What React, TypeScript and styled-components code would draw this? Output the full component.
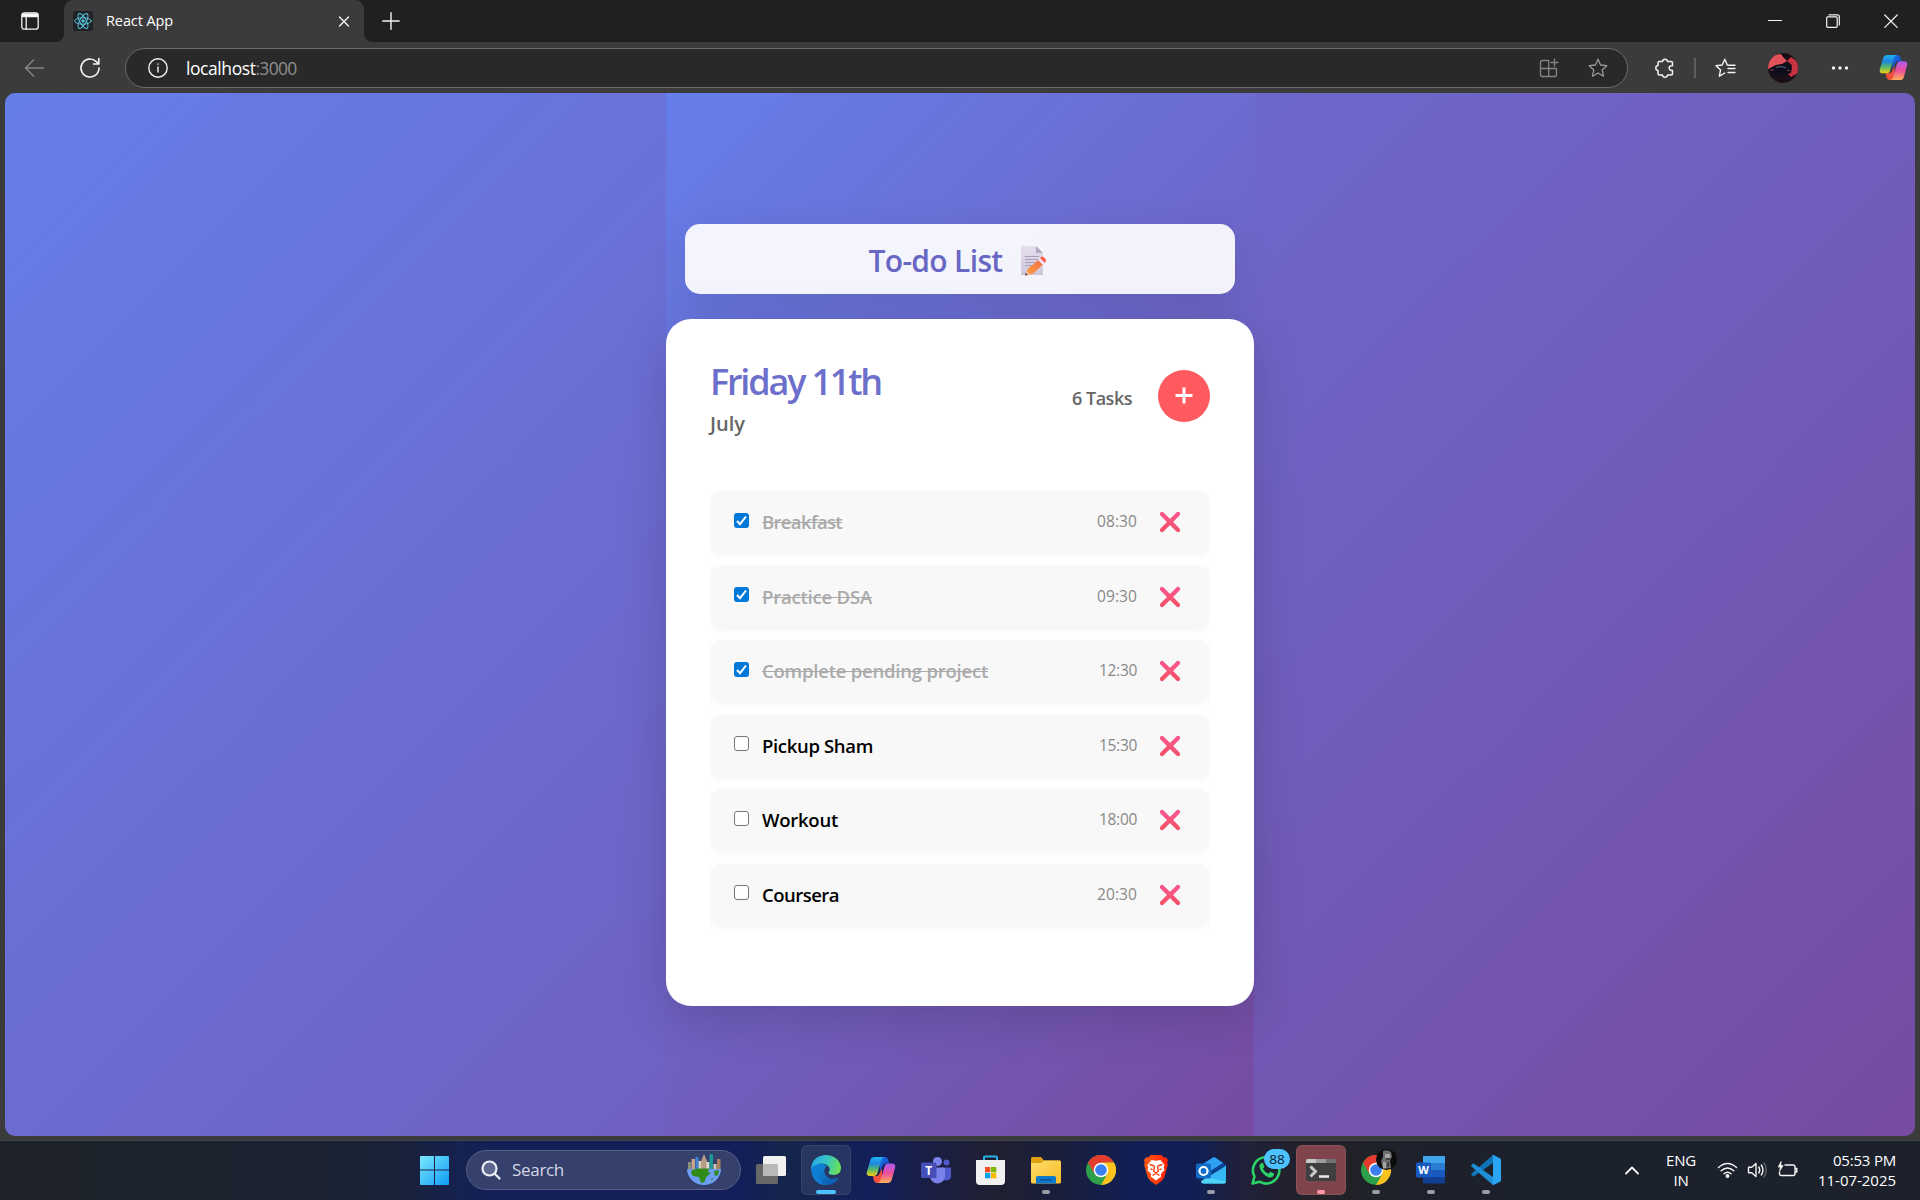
import React from "react";
import styled, { createGlobalStyle } from "styled-components";

const Global = createGlobalStyle`
  * { box-sizing: border-box; }
  html, body { margin: 0; padding: 0; }
  body { font-family: "Open Sans", "Noto Sans", sans-serif; overflow: hidden; }
  svg { display: block; flex: none; }
`;

const Screen = styled.div`
  width: 1920px;
  height: 1200px;
  display: flex;
  flex-direction: column;
  background: #3b3b3b;
  overflow: hidden;
`;

/* ---------- text fitted to a fixed advance width ---------- */
const FitSpan = styled.span<{ $w: number }>`
  display: inline-block;
  width: ${(p) => p.$w}px;
  white-space: nowrap;
  text-decoration: inherit;
`;

function Fit({ w, children }: { w: number; children: string }) {
  const ref = React.useRef<HTMLSpanElement>(null);
  const [spacing, setSpacing] = React.useState(0);
  React.useLayoutEffect(() => {
    const el = ref.current;
    if (!el) return;
    const range = document.createRange();
    range.selectNodeContents(el);
    const natural = range.getBoundingClientRect().width;
    setSpacing((w - natural) / children.length);
  }, [w, children]);
  return (
    <FitSpan ref={ref} $w={w} style={{ letterSpacing: spacing }}>
      {children}
    </FitSpan>
  );
}

/* ---------- browser chrome ---------- */
const TabStrip = styled.div`
  height: 42px;
  flex: none;
  display: flex;
  background: #202020;
`;
const TabActions = styled.div`
  width: 64px;
  display: flex;
  align-items: center;
  padding-left: 21px;
  background: #202020;
  border-bottom-right-radius: 8px;
`;
const TabWell = styled.div`
  display: flex;
  background: linear-gradient(#202020 20px, #3b3b3b 20px);
`;
const Tab = styled.div`
  width: 300px;
  display: flex;
  align-items: center;
  background: #3b3b3b;
  border-radius: 9px 9px 0 0;
  padding: 0 14px 0 9px;
  color: #fff;
  font-size: 14.5px;
`;
const TabIcon = styled.div`
  width: 20px;
  height: 20px;
  border-radius: 2px;
  background: #202225;
  margin-right: 13px;
`;
const TabTitle = styled.div`
  flex: 1;
  line-height: 20px;
  margin-top: -1px;
`;
const StripBack = styled.div`
  flex: 1;
  display: flex;
  background: #3b3b3b;
`;
const StripRest = styled.div`
  flex: 1;
  display: flex;
  align-items: center;
  justify-content: space-between;
  background: #202020;
  border-bottom-left-radius: 8px;
  padding: 0 22px 0 18px;
`;
const WindowButtons = styled.div`
  display: flex;
  gap: 44px;
  align-items: center;
`;
const Toolbar = styled.div`
  height: 51px;
  flex: none;
  display: flex;
  align-items: center;
  background: #3b3b3b;
  padding-left: 24px;
`;
const NavButtons = styled.div`
  display: flex;
  gap: 35px;
  width: 101px;
  align-items: center;
`;
const AddressBar = styled.div`
  width: 1503px;
  height: 40px;
  display: flex;
  align-items: center;
  border: 1px solid #6a6a6a;
  border-radius: 20px;
  background: #292929;
  padding: 0 19px 0 22px;
`;
const Url = styled.div`
  flex: 1;
  display: flex;
  margin-left: 18px;
  font-size: 17.5px;
  line-height: 24px;
  color: #fff;
`;
const Port = styled.span`
  color: #8f8f8f;
`;
const AddressIcons = styled.div`
  display: flex;
  gap: 29px;
`;
const ToolIcons = styled.div`
  display: flex;
  align-items: center;
  padding-left: 27px;
`;
const ToolDivider = styled.div`
  width: 2px;
  height: 20px;
  margin: 0 19px;
  background: #5c5c5c;
`;
const ProfileButton = styled.div`
  margin: 0 33px 0 32px;
`;
const CopilotButton = styled.div`
  margin-left: 30px;
`;

/* ---------- page ---------- */
const Page = styled.div`
  flex: none;
  height: 1043px;
  margin: 0 5px 4px;
  border-radius: 10px;
  overflow: hidden;
  display: flex;
  justify-content: center;
  background: linear-gradient(135deg, #667eea 0%, #764ba2 100%);
`;
const Column = styled.main`
  width: 588px;
  display: flex;
  flex-direction: column;
  align-items: center;
  padding-top: 131px;
  background: linear-gradient(135deg, #667eea 0%, #764ba2 100%);
`;
const Banner = styled.h1`
  width: 550px;
  height: 70px;
  flex: none;
  margin: 0 0 25px;
  padding: 3px 4px 0 0;
  display: flex;
  align-items: center;
  justify-content: center;
  gap: 17px;
  border-radius: 15px;
  background: rgba(255, 255, 255, 0.92);
  box-shadow: 0 10px 40px rgba(0, 0, 0, 0.1);
  color: #6867c4;
  font-size: 30px;
  line-height: 40px;
  font-weight: 600;
`;
const Card = styled.section`
  width: 588px;
  height: 687px;
  flex: none;
  padding: 44px 44px 0;
  border-radius: 25px;
  background: #fff;
  box-shadow: 0 12px 50px rgba(0, 0, 0, 0.16);
`;
const CardHeader = styled.header`
  height: 128px;
  display: flex;
  justify-content: space-between;
`;
const DateTitle = styled.h2`
  margin: 0;
  color: #6c6fcb;
  font-size: 36px;
  line-height: 38px;
  font-weight: 600;
`;
const Month = styled.div`
  margin-top: 10px;
  color: #666;
  font-size: 20px;
  line-height: 26px;
  font-weight: 600;
`;
const Summary = styled.div`
  display: flex;
  align-items: center;
  height: 52px;
  margin-top: 7px;
  gap: 26px;
`;
const TaskCount = styled.div`
  margin-top: 3px;
  color: #666;
  font-size: 18px;
  line-height: 24px;
  font-weight: 600;
`;
const AddButton = styled.button`
  width: 52px;
  height: 52px;
  border: 0;
  padding: 0;
  border-radius: 50%;
  background: #ff5a5f;
  display: flex;
  align-items: center;
  justify-content: center;
`;
const TaskList = styled.div`
  display: flex;
  flex-direction: column;
  gap: 14.5px;
  padding-bottom: 14px;
  overflow: hidden;
`;
const Task = styled.div`
  height: 60px;
  flex: none;
  display: flex;
  align-items: center;
  padding: 0 29px 0 24px;
  border-radius: 12px;
  background: #f8f8f8;
  box-shadow: 0 3px 8px rgba(0, 0, 0, 0.05);
`;
const Box = styled.div<{ $on: boolean }>`
  width: 15px;
  height: 15px;
  flex: none;
  margin: 0 13px 2px 0;
  border-radius: 3px;
  border: ${(p) => (p.$on ? "0" : "1px solid #767676")};
  background: ${(p) => (p.$on ? "#0078d7" : "#fff")};
`;
const TaskName = styled.div<{ $on: boolean }>`
  flex: 1;
  margin-top: 2px;
  font-size: 18.5px;
  line-height: 26px;
  font-weight: 600;
  color: ${(p) => (p.$on ? "#aaa" : "#000")};
  text-decoration: ${(p) => (p.$on ? "line-through 1px" : "none")};
`;
const TaskTime = styled.div`
  margin-right: 22px;
  font-size: 15.5px;
  line-height: 20px;
  font-weight: 500;
  color: #888;
`;
const RemoveButton = styled.div`
  margin-top: 2px;
`;

/* ---------- taskbar ---------- */
const Taskbar = styled.footer`
  height: 60px;
  flex: none;
  display: flex;
  align-items: center;
  justify-content: space-between;
  border-top: 1px solid #3d4450;
  background: linear-gradient(90deg, #1e2228 0, #1c222c 130px, #1b2331 300px, #182138 400px, #17224a 440px, #122057 500px, #131f59 740px, #15244b 785px,
    #121f5a 870px, #1b1e40 940px, #201f31 1000px, #191f3f 1070px, #111f57 1140px, #121f53 1200px, #20203c 1235px,
    #222226 1320px, #1e212c 1420px, #1b212d 1540px, #1c212c 1920px);
  color: #fff;
`;
const Apps = styled.div`
  display: flex;
  align-items: center;
  padding: 0 0 1px 410px;
`;
const AppSlot = styled.div<{ $tone?: string; $gap?: number }>`
  width: 50px;
  height: 50px;
  margin-right: ${(p) => p.$gap ?? 5}px;
  border-radius: 6px;
  display: flex;
  flex-direction: column;
  align-items: center;
  justify-content: flex-end;
  background: ${(p) => p.$tone ?? "transparent"};
  box-shadow: ${(p) => (p.$tone ? "inset 0 0 0 1px rgba(255,255,255,.07)" : "none")};
`;
const IconWrap = styled.div`
  position: relative;
  width: 30px;
  height: 30px;
  margin-bottom: 5px;
`;
const Running = styled.div<{ $color?: string; $w: number }>`
  width: ${(p) => p.$w}px;
  height: 4px;
  margin-bottom: 1px;
  border-radius: 2px;
  background: ${(p) => p.$color ?? "transparent"};
`;
const Search = styled.div`
  width: 275px;
  height: 40px;
  margin-right: 5px;
  display: flex;
  align-items: center;
  border-radius: 20px;
  border: 1px solid #555f87;
  background: #35406d;
  padding: 0 18px 0 14px;
`;
const SearchText = styled.div`
  flex: 1;
  margin-left: 11px;
  font-size: 17px;
  line-height: 24px;
  color: #d3d6e2;
`;
const Badge = styled.div`
  position: absolute;
  top: -6px;
  left: 13px;
  width: 26px;
  height: 20px;
  border-radius: 10px;
  background: #4cc2ff;
  color: #0c1a2b;
  font-size: 13.5px;
  line-height: 20px;
  text-align: center;
`;
const Avatar = styled.div`
  position: absolute;
  top: -6px;
  left: 15px;
`;
const Tray = styled.div`
  display: flex;
  align-items: center;
  padding: 0 24px 2px 0;
  font-size: 15px;
  line-height: 20px;
`;
const Lang = styled.div`
  width: 32px;
  margin: 0 20px 0 25px;
  display: flex;
  flex-direction: column;
  align-items: center;
`;
const Status = styled.div`
  display: flex;
  gap: 9px;
  margin-right: 20px;
`;
const Clock = styled.div`
  display: flex;
  flex-direction: column;
  align-items: flex-end;
`;

/* ---------- drawings ---------- */
const Line = (p: { w?: number; h?: number; c?: string; sw?: number; children: React.ReactNode }) => (
  <svg
    width={p.w ?? 20}
    height={p.h ?? 20}
    viewBox={`0 0 ${p.w ?? 20} ${p.h ?? 20}`}
    fill="none"
    stroke={p.c ?? "#f4f4f4"}
    strokeWidth={p.sw ?? 1.4}
    strokeLinecap="round"
    strokeLinejoin="round"
  >
    {p.children}
  </svg>
);
const STAR = "M10 1.3 L12.6 7 L18.8 7.7 L14.2 11.9 L15.5 18.2 L10 15 L4.5 18.2 L5.8 11.9 L1.2 7.7 L7.4 7 Z";

const ReactLogo = () => (
  <Line c="#58c4dc" sw={1}>
    <ellipse cx="10" cy="10" rx="8.4" ry="3.2" />
    <ellipse cx="10" cy="10" rx="8.4" ry="3.2" transform="rotate(60 10 10)" />
    <ellipse cx="10" cy="10" rx="8.4" ry="3.2" transform="rotate(120 10 10)" />
    <circle cx="10" cy="10" r="1.2" fill="#58c4dc" />
  </Line>
);

const Memo = () => (
  <svg width="28" height="32" viewBox="0 0 28 32">
    <defs>
      <linearGradient id="paper" x1="0" y1="0" x2="0" y2="1">
        <stop offset="0" stopColor="#e4dfee" />
        <stop offset="1" stopColor="#cfc6da" />
      </linearGradient>
      <linearGradient id="pencil" x1="0" y1="1" x2="1" y2="0">
        <stop offset="0" stopColor="#ff9a3c" />
        <stop offset="1" stopColor="#f2704a" />
      </linearGradient>
    </defs>
    <path d="M1 1h15l7 7v22H1z" fill="url(#paper)" />
    <path d="M16 1l7 7h-7z" fill="#b3abc0" />
    <path d="M5 11.500h14M5 14.500h14M5 17.500h12M5 20.500h7" stroke="#a79fb6" strokeWidth="1.200" />
    <path d="M6.500 29.500l1.200-5.500L19 14.500l4.500 4.500L12.500 29z" fill="url(#pencil)" />
    <path d="M5.500 30.500l1-4.500 3.800 3.700z" fill="#f3c3a8" />
    <path d="M5 30.500l.6-2.800 2.400 2.300z" fill="#5b3a4d" />
    <path d="M18 15l2-2 4.800 4.800-2 2z" fill="#ece6f2" />
    <path d="M20 13l1.500-1.200q1.200-.6 2 .2l2.300 2.500q.8 1 0 1.900l-1.200 1.300z" fill="#ff5c50" />
  </svg>
);

const Cross = () => (
  <svg width="22" height="22" viewBox="0 0 22 22">
    <defs>
      <linearGradient id="cross" x1="0" y1="0" x2="0" y2="1">
        <stop offset="0" stopColor="#fc5690" />
        <stop offset="1" stopColor="#f45263" />
      </linearGradient>
    </defs>
    <path d="M3 3L19 19M19 3L3 19" stroke="#ea4a7c" strokeWidth="4.200" strokeLinecap="round" />
    <path d="M3 3L19 19M19 3L3 19" stroke="url(#cross)" strokeWidth="3.200" strokeLinecap="round" />
  </svg>
);

const Copilot = ({ size, id }: { size: number; id: string }) => (
  <svg width={size} height={size} viewBox="0 0 30 30">
    <defs>
      <linearGradient id={id + "a"} x1="0" y1="0" x2="0" y2="1">
        <stop offset="0" stopColor="#1fb3f5" />
        <stop offset=".35" stopColor="#1f86e0" />
        <stop offset=".65" stopColor="#53b86a" />
        <stop offset="1" stopColor="#f5cf13" />
      </linearGradient>
      <linearGradient id={id + "b"} x1="0" y1="0" x2="0" y2="1">
        <stop offset="0" stopColor="#a95cf0" />
        <stop offset=".5" stopColor="#ee4e9b" />
        <stop offset="1" stopColor="#ffb057" />
      </linearGradient>
      <linearGradient id={id + "c"} x1="0" y1="0" x2="1" y2="1">
        <stop offset="0" stopColor="#1b74e8" />
        <stop offset="1" stopColor="#173cc0" />
      </linearGradient>
    </defs>
    <path d="M14 2h5q2.200 0 3 2.300l1.300 4.200h-3.500q-2.500 0-3.300 2.500L14 17z" fill={`url(#${id}c)`} />
    <path d="M16 28h-5q-2.200 0-3-2.300L6.700 21h3.500q2.500 0 3.300-2.500L16 13z" fill="#f0503c" />
    <path d="M8.500 2H18q-1.700.4-2.500 3l-4 13q-.9 3-3.800 3H4q-4.300 0-3-4.500L4.300 5Q5.300 2 8.500 2z" fill={`url(#${id}a)`} />
    <path d="M21.500 28H12q1.700-.4 2.500-3l4-13.500q.9-3 3.800-3H26q4.300 0 3 4.500L25.700 25q-1 3-4.200 3z" fill={`url(#${id}b)`} />
  </svg>
);

const Chrome = () => (
  <svg width="30" height="30" viewBox="0 0 30 30">
    <circle cx="15" cy="15" r="15" fill="#2da04a" />
    <path d="M2 7.500A15 15 0 0 1 28 7.500H15L8.500 18.750z" fill="#e33b2e" />
    <path d="M28 7.500A15 15 0 0 1 15 30L21.500 18.750 15 7.500z" fill="#fcc31e" />
    <circle cx="15" cy="15" r="7.300" fill="#fff" />
    <circle cx="15" cy="15" r="5.800" fill="#3a80ee" />
  </svg>
);

const Edge = () => (
  <svg width="30" height="30" viewBox="0 0 30 30">
    <defs>
      <linearGradient id="eg1" x1="0" y1="0.300" x2="1" y2="0.500">
        <stop offset="0" stopColor="#27a9e8" />
        <stop offset=".5" stopColor="#35c4c4" />
        <stop offset="1" stopColor="#6de253" />
      </linearGradient>
      <linearGradient id="eg2" x1="0" y1="0" x2="1" y2="1">
        <stop offset="0" stopColor="#1390e0" />
        <stop offset="1" stopColor="#0b55a8" />
      </linearGradient>
    </defs>
    <path d="M0 14Q1 27 14 30 23 30.500 27.500 23.500 28 22.300 26.500 22.800 19 26 14.500 20 11.500 14 16 11 8 5 0 14z" fill="url(#eg2)" />
    <path d="M8 15Q5 24 14 30 5 29.500 1.500 21-.5 15 2 11 8 7 14 11 9 12 8 15z" fill="#0f7fd6" />
    <path d="M0 14Q1 1 14.500 0 28 .5 30 12.500 30 19.500 23 20 18 20 17.500 17.800 19.500 15.500 18.500 12.800 16 8.500 10 8.500 3.500 9 0 14z" fill="url(#eg1)" />
  </svg>
);

const Icons: Record<string, React.ReactNode> = {
  start: (
    <svg width="30" height="30" viewBox="0 0 30 30">
      <defs>
        <linearGradient id="win" x1="0" y1="0" x2="1" y2="1">
          <stop offset="0" stopColor="#7be9ff" />
          <stop offset="1" stopColor="#0f9af5" />
        </linearGradient>
      </defs>
      <path d="M1 1h13v13.500H0V2q0-1 1-1zM15 1h13q1 0 1 1v12.500H15zM0 15.500h14V30H1q-1 0-1-1zM15 15.500h14V29q0 1-1 1H15z" fill="url(#win)" />
    </svg>
  ),
  taskview: (
    <svg width="30" height="30" viewBox="0 0 30 30">
      <rect x="0" y="9" width="22" height="20" rx="1.500" fill="#68686b" />
      <rect x="7" y="1" width="23" height="20" rx="1.500" fill="#f0f0f0" />
      <path d="M7 9h15v12H8.500Q7 21 7 19.500z" fill="#b9b9ba" />
    </svg>
  ),
  edge: <Edge />,
  copilot: <Copilot size={30} id="cb" />,
  teams: (
    <svg width="30" height="30" viewBox="0 0 30 30">
      <circle cx="25.500" cy="7.500" r="3" fill="#5059c9" />
      <circle cx="16.500" cy="6.500" r="4.500" fill="#7b83eb" />
      <path d="M21 12.500h8q1.500 0 1.500 1.500v6q0 5-5 5.500-3 0-4.500-2z" fill="#5059c9" />
      <path d="M9 12.500h13.500q1.500 0 1.500 1.500v7q-.5 7-7.500 7.500Q9.500 28 9 21z" fill="#7b83eb" />
      <rect x="0" y="7.500" width="15.500" height="15.500" rx="1.500" fill="#464eb8" />
      <text x="7.700" y="19.500" textAnchor="middle" fontSize="12" fontWeight="700" fill="#fff">T</text>
    </svg>
  ),
  store: (
    <svg width="30" height="30" viewBox="0 0 30 30">
      <path d="M8 6V2.500q0-1 1-1h11q1 0 1 1V6" fill="none" stroke="#25b4ea" strokeWidth="2" />
      <path d="M0 5h29v21q0 4-4 4H4q-4 0-4-4z" fill="#f1f1f1" />
      <rect x="9" y="12" width="5.300" height="5.300" fill="#f25022" />
      <rect x="15" y="12" width="5.300" height="5.300" fill="#7fba00" />
      <rect x="9" y="18" width="5.300" height="5.300" fill="#00a4ef" />
      <rect x="15" y="18" width="5.300" height="5.300" fill="#ffb900" />
    </svg>
  ),
  explorer: (
    <svg width="30" height="30" viewBox="0 0 30 30">
      <defs>
        <linearGradient id="fold" x1="0" y1="0" x2="1" y2="1">
          <stop offset="0" stopColor="#ffdc6b" />
          <stop offset="1" stopColor="#f9bd26" />
        </linearGradient>
      </defs>
      <path d="M1.500 2h8.500l3 3.500H29V12H0V3.500Q0 2 1.500 2z" fill="#dea010" />
      <path d="M0 8h10l3-2.500h15.500q1.500 0 1.500 1.500v20q0 1.500-1.500 1.500h-27Q0 28.500 0 27z" fill="url(#fold)" />
      <path d="M5 28.500V23q0-2 2-2h16q2 0 2 2v5.500z" fill="#0d78cc" />
      <path d="M9 24.700h12" stroke="#0a4f93" strokeWidth="1.300" />
    </svg>
  ),
  chrome: <Chrome />,
  brave: (
    <svg width="30" height="30" viewBox="0 0 30 30">
      <defs>
        <linearGradient id="brv" x1="0" y1="0" x2="1" y2="0">
          <stop offset="0" stopColor="#ff5a14" />
          <stop offset="1" stopColor="#ff1f05" />
        </linearGradient>
      </defs>
      <path d="M9.500 0h11l2.200 2.500 2-.3L27 5l-.8 3 .6 2-3.600 12.500-2.700 3.500L15 30l-5.500-4-2.700-3.500L3.200 10l.6-2L3 5l2.300-2.800 2 .3z" fill="url(#brv)" />
      <path d="M10.500 5l4.500.8L19.500 5l4 5-.8 2.500.8 2.500-3.700 4 .4 2.500L15 25.500 9.800 21.500l.4-2.500L6.500 15l.8-2.500L6.500 10z" fill="#fff" />
      <path d="M8.500 9.500l5 1.500M21.500 9.500l-5 1.500M13.500 11.500l-.8 5 2.300 1.300 2.300-1.300-.8-5M9.500 14l2.200.6M20.500 14l-2.200.6M11.500 20.300l3.500-1.800 3.500 1.800" stroke="#fb3d12" strokeWidth="1.400" fill="none" />
    </svg>
  ),
  outlook: (
    <svg width="30" height="30" viewBox="0 0 30 30">
      <path d="M3 11L17 2.500q1-.6 2 0L30 10v5L16 24 3 18z" fill="#0f6cc8" />
      <path d="M6 10L17 2.500q1-.6 2 0L27 8 13 17z" fill="#2f9ff0" />
      <path d="M13 17L27 8l3 2-15 12z" fill="#0d3f8f" />
      <path d="M30 11v15q0 2.500-2.500 2.500H8Q5 28.500 5 26z" fill="#35b8f3" />
      <path d="M11 22l19 5q-.5 1.500-2.500 1.500H8q-2.500 0-3-1.500z" fill="#4fd4f5" />
      <rect x="0" y="8.500" width="15" height="15" rx="2" fill="#0f6cc8" />
      <circle cx="7.500" cy="16" r="4" stroke="#fff" strokeWidth="2.200" fill="none" />
    </svg>
  ),
  whatsapp: (
    <svg width="30" height="30" viewBox="0 0 30 30">
      <path d="M1.500 28.500L3.500 21.500A13.200 13.200 0 1 1 8.500 26.700z" fill="none" stroke="#2bd366" strokeWidth="2.600" strokeLinejoin="round" />
      <path d="M10.500 8q-2.500 1.500-2 4 1.500 7 9.500 10.500 3.500.5 5-2.500v-1.500l-3.500-1.700-2 2q-4-1.500-5.500-5l1.300-1.800L12 8z" fill="#2bd366" />
    </svg>
  ),
  terminal: (
    <svg width="30" height="30" viewBox="0 0 30 30">
      <rect x="0" y="4" width="30" height="22" rx="1.500" fill="#3f3f42" />
      <path d="M1.500 4H10v4H0V5.500Q0 4 1.500 4z" fill="#c8c8c8" />
      <path d="M10 4h10v4H10z" fill="#9b9b9d" />
      <path d="M20 4h8.500Q30 4 30 5.500V8H20z" fill="#737375" />
      <path d="M4.500 11.500l5 5-5 5" stroke="#c9c9c9" strokeWidth="3" fill="none" />
      <path d="M13 21.500h10" stroke="#e6e6e6" strokeWidth="2.600" />
    </svg>
  ),
  word: (
    <svg width="30" height="30" viewBox="0 0 30 30">
      <path d="M7 1h21q1 0 1 1v6H7z" fill="#41a5ee" />
      <path d="M7 8h22v7H7z" fill="#2b7cd3" />
      <path d="M7 15h22v7H7z" fill="#185abd" />
      <path d="M7 22h22v5.500q0 1-1 1H8q-1 0-1-1z" fill="#103f91" />
      <rect x="0" y="7.500" width="15" height="15" rx="1.500" fill="#185abd" />
      <text x="7.500" y="19" textAnchor="middle" fontSize="11" fontWeight="700" fill="#fff">W</text>
    </svg>
  ),
  vscode: (
    <svg width="30" height="30" viewBox="0 0 30 30">
      <path d="M.5 18.500L22 0v8L3 21.200q-.7.400-1.200 0L.4 19.800q-.5-.7.100-1.300z" fill="#1173b8" />
      <path d="M.5 11.500L22 30v-8L3 8.800q-.7-.4-1.200 0L.4 10.200q-.5.700.1 1.300z" fill="#1c8fd8" />
      <path d="M22.500 0l6.500 3.200q1 .5 1 1.800v20q0 1.300-1 1.800L22.500 30q-1 0-1.500-.8l1-.7V1.500l-1-.7q.5-.8 1.500-.8z" fill="#2aa5f2" />
    </svg>
  ),
};

const Globe = () => (
  <svg width="36" height="34" viewBox="0 0 36 34">
    <rect x="2" y="9" width="3" height="9" fill="#8b8f7a" />
    <rect x="5.500" y="6" width="3.500" height="12" fill="#c9a58a" />
    <rect x="9.500" y="4" width="3" height="14" fill="#3e83d4" />
    <rect x="12.500" y="8" width="3" height="10" fill="#d6cfc4" />
    <path d="M15 18V8l3-7 3 7v10z" fill="#b99c88" />
    <rect x="20.500" y="9" width="3" height="9" fill="#e2d9cc" />
    <rect x="23.500" y="1" width="3.500" height="17" rx="1.500" fill="#1c9a96" />
    <rect x="27.500" y="11" width="3" height="7" fill="#d9c9b4" />
    <rect x="31" y="6" width="3.500" height="12" fill="#a9805f" />
    <path d="M1 16h34a17 16 0 0 1-34 0z" fill="#6d9df4" />
    <path d="M6 17l6-1.500h11l-1 3.500 3 1-5 4-1.500 5-3.500 1-2-6-6-1-2-3z" fill="#2f8a17" />
    <path d="M28 18l5-1-1 5-3 1zM25 26l2-1-1 3z" fill="#2f8a17" />
  </svg>
);

const Portrait = () => (
  <svg width="30" height="30" viewBox="0 0 30 30">
    <defs>
      <clipPath id="face"><circle cx="15" cy="15" r="15" /></clipPath>
      <filter id="soft"><feGaussianBlur stdDeviation=".7" /></filter>
    </defs>
    <g clipPath="url(#face)">
      <rect width="30" height="30" fill="#190f18" />
      <g filter="url(#soft)">
        <path d="M0 8l5-6 8-1 2 3 4 4-5 3-6 1-8 4z" fill="#e0525a" />
        <path d="M19 8l4-4 7 5v11l-7 4-3-3 3-4 1-5z" fill="#c9323f" />
        <path d="M13 0l2 3 5 4 3-5z" fill="#180e16" />
        <path d="M1 17q4-5 12-5.500 8 0 11 3.500l-1 5-8 2q-8 1-13-1z" fill="#0f0f1c" />
        <path d="M8 14.500q5-2 10 .5" stroke="#4f566e" strokeWidth="1.200" fill="none" />
        <path d="M2 17h4M19 17.500h3" stroke="#8b3344" strokeWidth="1.200" />
      </g>
    </g>
  </svg>
);

const MiniPortrait = () => (
  <svg width="21" height="21" viewBox="0 0 21 21">
    <circle cx="10.500" cy="10.500" r="10.500" fill="#0c0c0c" />
    <path d="M7 2q4-2 8 1l1 5-2 3 1 8-8 1-2-8 2-4z" fill="#6d6d6d" />
    <path d="M9 5h5v4H9zM7 13h3v6H7z" fill="#a5a5a5" />
    <path d="M10 10h4M12 13v5" stroke="#333" strokeWidth="1.500" />
  </svg>
);

const tasks = [
  { name: "Breakfast", w: 80, time: "08:30", tw: 40, on: true },
  { name: "Practice DSA", w: 110, time: "09:30", tw: 40, on: true },
  { name: "Complete pending project", w: 226, time: "12:30", tw: 38, on: true },
  { name: "Pickup Sham", w: 111, time: "15:30", tw: 38, on: false },
  { name: "Workout", w: 76, time: "18:00", tw: 38, on: false },
  { name: "Coursera", w: 77, time: "20:30", tw: 40, on: false },
];

const grey = "#9b9ea3";
const pinned: { id: string; run?: string; w?: number; tone?: string; badge?: string; avatar?: boolean }[] = [
  { id: "taskview" },
  { id: "edge", run: "#4cc2ff", w: 20, tone: "rgba(75,88,125,.36)" },
  { id: "copilot" },
  { id: "teams" },
  { id: "store" },
  { id: "explorer", run: grey },
  { id: "chrome" },
  { id: "brave" },
  { id: "outlook", run: grey },
  { id: "whatsapp", badge: "88" },
  { id: "terminal", run: "#ff99a4", tone: "#80454c" },
  { id: "chrome", run: grey, avatar: true },
  { id: "word", run: grey },
  { id: "vscode", run: grey },
];

export default function App() {
  return (
    <Screen>
      <Global />
      <TabStrip>
        <TabWell>
          <TabActions>
            <Line w={18} h={18} sw={1.3}>
              <rect x=".8" y=".8" width="16.400" height="16.400" rx="2.500" />
              <path d="M1.500 2h15v2.500h-15z" fill="#fff" />
              <path d="M5.200 5v12" />
            </Line>
          </TabActions>
          <Tab>
            <TabIcon><ReactLogo /></TabIcon>
            <TabTitle><Fit w={67}>React App</Fit></TabTitle>
            <Line w={12} h={12} sw={1.4}><path d="M1.500 2l9 9M10.500 2l-9 9" /></Line>
          </Tab>
        </TabWell>
        <StripBack>
          <StripRest>
            <Line w={18} h={18} sw={1.4}><path d="M9 .8v16.400M.8 9h16.400" /></Line>
            <WindowButtons>
              <Line w={14} h={14} sw={1.200}><path d="M.5 6.500h13" /></Line>
              <Line w={14} h={14} sw={1.200}>
                <rect x=".7" y="2.800" width="10.500" height="10.500" rx="1" />
                <path d="M3 .8h8.300q2 0 2 2V11" />
              </Line>
              <Line w={14} h={14} sw={1.200}><path d="M.8 1l12.400 12.400M13.200 1L.8 13.400" /></Line>
            </WindowButtons>
          </StripRest>
        </StripBack>
      </TabStrip>
      <Toolbar>
        <NavButtons>
          <Line c="#868686"><path d="M19.500 10H1.500M9.500 2L1.500 10l8 8" /></Line>
          <Line w={22} h={22} sw={1.6}><path d="M20 11a9 9 0 1 1-3-6.700L19.500 7M19.800 1.500V7H14.500" /></Line>
        </NavButtons>
        <AddressBar>
          <Line><circle cx="10" cy="10" r="9.200" /><path d="M10 9v5" /><path d="M10 6v.2" /></Line>
          <Url>
            <Fit w={69.500}>localhost</Fit>
            <Port><Fit w={41}>:3000</Fit></Port>
          </Url>
          <AddressIcons>
            <Line c="#858585" sw={1.3}>
              <path d="M10 2.500H3.500q-2 0-2 2v12q0 2 2 2h12q2 0 2-2V10.500H1.500M9.700 2.500v16M15.500 1v7M12 4.500h7" />
            </Line>
            <Line c="#9a9a9a" sw={1.300}><path d={STAR} /></Line>
          </AddressIcons>
        </AddressBar>
        <ToolIcons>
          <Line sw={1.5}>
            <path d="M4 3.500h3.500q.2-2.300 2.500-2.300t2.500 2.300H16q1.500 0 1.500 1.500v2.800q-3.300-.3-3.300 2.300t3.300 2.300V15.500q0 1.500-1.500 1.500h-3.500q-.2 2.200-2.500 2.200T7.500 17H4.500Q3 17 3 15.500v-3q-2.200-.3-2.200-2.400T3 7.600V5q0-1.500 1-1.500z" />
          </Line>
          <ToolDivider />
          <Line w={21} sw={1.400}>
            <path d="M14 7.200L12.300 7 9.800 1.300 7.200 7 1 7.700l4.600 4.200-1.300 6.300 5.500-3.200M13 10.500h7M13 14.500h7M14.500 7.200h5.500" />
          </Line>
          <ProfileButton><Portrait /></ProfileButton>
          <svg width="18" height="6" viewBox="0 0 18 6" fill="#f4f4f4">
            <circle cx="2.500" cy="3" r="1.700" /><circle cx="9" cy="3" r="1.700" /><circle cx="15.500" cy="3" r="1.700" />
          </svg>
          <CopilotButton><Copilot size={29} id="ct" /></CopilotButton>
        </ToolIcons>
      </Toolbar>

      <Page>
        <Column>
          <Banner>
            <Fit w={134}>To-do List</Fit>
            <Memo />
          </Banner>
          <Card>
            <CardHeader>
              <div>
                <DateTitle><Fit w={171}>Friday 11th</Fit></DateTitle>
                <Month><Fit w={35}>July</Fit></Month>
              </div>
              <Summary>
                <TaskCount><Fit w={60}>6 Tasks</Fit></TaskCount>
                <AddButton aria-label="Add task">
                  <svg width="20" height="20" viewBox="0 0 20 20" stroke="#fff" strokeWidth="3">
                    <path d="M10 1.500v16M1.500 9.500h17" />
                  </svg>
                </AddButton>
              </Summary>
            </CardHeader>
            <TaskList>
              {tasks.map((t) => (
                <Task key={t.name}>
                  <Box $on={t.on}>
                    {t.on && (
                      <svg width="15" height="15" viewBox="0 0 15 15" fill="none" stroke="#fff" strokeWidth="2">
                        <path d="M3 8l3 3.200L12 3.500" />
                      </svg>
                    )}
                  </Box>
                  <TaskName $on={t.on}><Fit w={t.w}>{t.name}</Fit></TaskName>
                  <TaskTime><Fit w={t.tw}>{t.time}</Fit></TaskTime>
                  <RemoveButton><Cross /></RemoveButton>
                </Task>
              ))}
            </TaskList>
          </Card>
        </Column>
      </Page>

      <Taskbar>
        <Apps>
          <AppSlot $gap={6}>
            <IconWrap>{Icons.start}</IconWrap>
            <Running $w={8} />
          </AppSlot>
          <Search>
            <svg width="20" height="20" viewBox="0 0 20 20" fill="#5d6790" stroke="#eceef5" strokeWidth="2.200" strokeLinecap="round">
              <circle cx="8.500" cy="8.500" r="7" /><path d="M13.800 13.800L18.500 18.500" />
            </svg>
            <SearchText><Fit w={52}>Search</Fit></SearchText>
            <Globe />
          </Search>
          {pinned.map((a, i) => (
            <AppSlot key={i} $tone={a.tone}>
              <IconWrap>
                {Icons[a.id]}
                {a.badge && <Badge>{a.badge}</Badge>}
                {a.avatar && <Avatar><MiniPortrait /></Avatar>}
              </IconWrap>
              <Running $w={a.w ?? 8} $color={a.run} />
            </AppSlot>
          ))}
        </Apps>
        <Tray>
          <Line w={16} h={10} sw={1.800}><path d="M2 8.500l6-6 6 6" /></Line>
          <Lang>
            <Fit w={30}>ENG</Fit>
            <Fit w={15}>IN</Fit>
          </Lang>
          <Status>
            <Line w={21} h={18} sw={1.500}>
              <path d="M1.500 6.500q9-8 18 0M4.200 9.700q6.300-5.500 12.600 0M7 12.700q3.500-3 7 0" />
              <circle cx="10.500" cy="15" r="1.200" fill="#fff" />
            </Line>
            <Line w={21} h={18} sw={1.400}>
              <path d="M1.500 6.200h3.200L9 2.500v13L4.700 11.800H1.500zM11.800 6q2 3 0 6M14.300 4q3.400 5 0 10" />
              <path d="M17 2q4.500 7 0 14" stroke="#5c626c" />
            </Line>
            <Line w={21} h={18} sw={1.400}>
              <path d="M8 4h8q2 0 2 2v6.500q0 2-2 2H4.500q-2 0-2-2v-1.500M18.500 7.500h1.300v3.500h-1.300" />
              <path d="M4 .8L1.200 6h2.300l-.8 4 3.400-5.400H4z" fill="#fff" strokeWidth=".8" />
            </Line>
          </Status>
          <Clock>
            <Fit w={63}>05:53 PM</Fit>
            <Fit w={78}>11-07-2025</Fit>
          </Clock>
        </Tray>
      </Taskbar>
    </Screen>
  );
}
